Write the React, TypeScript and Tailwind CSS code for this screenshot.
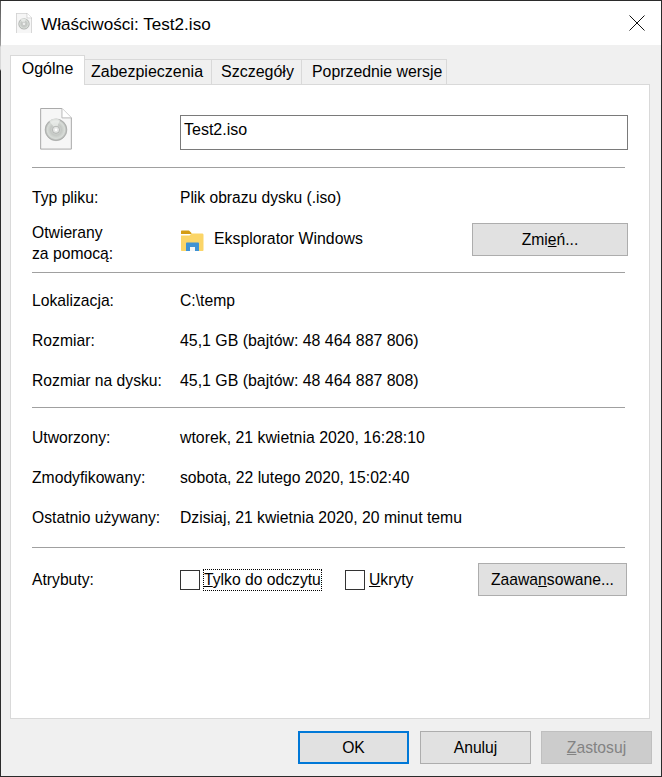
const font = { fontFamily: '"Liberation Sans", Arial, sans-serif' }

function IsoIcon({ size }: { size: number }) {
  return (
    <svg width={size} height={size * 1.3} viewBox="0 0 32 42" className="shrink-0">
      <defs>
        <radialGradient id={`disc${size}`} cx="50%" cy="50%" r="50%">
          <stop offset="0" stopColor="#e8e8e8" />
          <stop offset="0.5" stopColor="#c4c8c4" />
          <stop offset="0.8" stopColor="#d8dcd8" />
          <stop offset="1" stopColor="#a8aaa8" />
        </radialGradient>
      </defs>
      <path d="M0.5 0.5H22L31.5 10V41.5H0.5Z" fill="#f6f6f6" stroke="#a8a8a8" />
      <path d="M22 0.5V10H31.5" fill="#ffffff" stroke="#b8b8b8" />
      <circle cx="16" cy="22" r="11" fill={`url(#disc${size})`} stroke="#a4a6a4" strokeWidth="0.6" />
      <path d="M16 22L9 13A11 11 0 0 1 20 12Z" fill="#f0f2f0" opacity="0.7" />
      <circle cx="16" cy="22" r="3.6" fill="#e4e6e4" stroke="#a8aaa8" strokeWidth="0.8" />
      <circle cx="16" cy="22" r="1.3" fill="#ffffff" />
    </svg>
  )
}

function FolderIcon() {
  return (
    <svg width="24" height="24" viewBox="0 0 24 24" className="shrink-0">
      <path d="M1 2.5C1 1.9 1.4 1.5 2 1.5H9L11.5 4V5H1Z" fill="#d49c14" />
      <path d="M1 6.5L9.5 6.5L11.5 4.5H22C22.6 4.5 23.5 5 23.5 5.6V21C23.5 21.6 23 22 22.4 22H2C1.4 22 1 21.6 1 21Z" fill="#fbd568" />
      <path d="M6 22V14.5C6 14 6.4 13.5 7 13.5H18C18.6 13.5 19 14 19 14.5V22H15V18H10V22Z" fill="#3f92d4" />
      <rect x="10" y="18" width="5" height="4" fill="#f4f6f8" />
    </svg>
  )
}

function Separator() {
  return <div className="ml-[21px] mr-[24px] h-px bg-[#a0a0a0]" />
}

function Row({
  label,
  value,
  className,
  valueClass,
}: {
  label: string
  value: string
  className?: string
  valueClass?: string
}) {
  return (
    <div className={`flex h-[18px] items-center pl-[21px] ${className ?? ''}`}>
      <span className="w-[148px] shrink-0">{label}</span>
      <span className={valueClass}>{value}</span>
    </div>
  )
}

function Button({
  children,
  className,
}: {
  children: React.ReactNode
  className?: string
}) {
  return (
    <button className={`flex h-[33px] items-center justify-center ${className ?? ''}`}>
      {children}
    </button>
  )
}

const normalButton = 'border border-[#adadad] bg-[#e1e1e1]'

export default function App() {
  return (
    <div
      style={font}
      className="relative flex h-[777px] w-[662px] flex-col overflow-hidden border-t border-r border-b border-[#2b2b2b] bg-[#f0f0f0] text-[15.7px] text-black"
    >
      {/* window edge over the left side */}
      <div className="absolute bottom-0 left-0 top-0 w-px bg-[linear-gradient(to_bottom,#555555_0,#999999_44px,#d8d8d8_46px,#d8d8d8_68px,#2b2b2b_70px)]" />

      {/* TITLE BAR */}
      <div className="flex h-[44px] shrink-0 items-center bg-white pl-4 pr-4">
        <IsoIcon size={16} />
        <span className="ml-[9px] mt-[3px] text-[17.1px]">Właściwości: Test2.iso</span>
        <svg width="16" height="16" viewBox="0 0 16 16" className="ml-auto">
          <path d="M0.5 0.5L15.5 15.5M15.5 0.5L0.5 15.5" stroke="#111111" strokeWidth="1" />
        </svg>
      </div>

      {/* TABS */}
      <div className="relative z-10 -mb-px ml-[10px] mt-[10px] flex h-[30px] shrink-0 items-end text-[16px]">
        <div className="flex h-[30px] w-[75px] items-center justify-center border-x border-t border-[#d9d9d9] bg-white pb-[3px]">
          Ogólne
        </div>
        <div className="flex h-[26px] w-[127px] items-center border-r border-t border-b border-[#d9d9d9] pl-[6px]">
          Zabezpieczenia
        </div>
        <div className="flex h-[26px] w-[90px] items-center border-r border-t border-b border-[#d9d9d9] pl-[9px]">
          Szczegóły
        </div>
        <div className="flex h-[26px] w-[145px] items-center border-r border-t border-b border-[#d9d9d9] pl-[10px] text-[15.85px]">
          Poprzednie wersje
        </div>
      </div>

      {/* PANEL */}
      <div className="ml-[10px] h-[635px] w-[640px] shrink-0 border border-[#d9d9d9] bg-white">
        <div className="flex h-[82px] items-start pl-[29px]">
          <div className="mt-[23px]">
            <IsoIcon size={32} />
          </div>
          <div className="ml-[108px] mt-[30px] flex h-[35px] w-[448px] items-start border border-[#7a7a7a] pl-[3px] pt-[2px] text-[16px]">
            Test2.iso
          </div>
        </div>
        <Separator />

        <Row label="Typ pliku:" value="Plik obrazu dysku (.iso)" className="mt-[21px]" valueClass="text-[15.6px]" />

        <div className="mt-[16px] flex h-[33px] pl-[21px]">
          <div className="-mt-[1px] w-[148px] shrink-0 leading-[21px]">
            Otwierany
            <br />
            za pomocą:
          </div>
          <div className="flex h-[33px] flex-1 items-start">
            <div className="mt-[6px]">
              <FolderIcon />
            </div>
            <span className="ml-[10px] mt-[4px] text-[15.85px]">Eksplorator Windows</span>
            <Button className={`ml-auto mr-[21px] w-[156px] ${normalButton}`}>
              <span>
                Zmi<span className="underline">e</span>ń...
              </span>
            </Button>
          </div>
        </div>

        <div className="h-[16px]" />
        <Separator />

        <Row label="Lokalizacja:" value="C:\temp" className="mt-[19px]" />
        <Row label="Rozmiar:" value="45,1 GB (bajtów: 48 464 887 806)" className="mt-[22px]" valueClass="text-[15.9px]" />
        <Row label="Rozmiar na dysku:" value="45,1 GB (bajtów: 48 464 887 808)" className="mt-[22px]" valueClass="text-[15.9px]" />
        <div className="h-[17px]" />
        <Separator />

        <Row label="Utworzony:" value="wtorek, 21 kwietnia 2020, 16:28:10" className="mt-[21px]" valueClass="text-[15.85px]" />
        <Row label="Zmodyfikowany:" value="sobota, 22 lutego 2020, 15:02:40" className="mt-[22px]" />
        <Row label="Ostatnio używany:" value="Dzisiaj, 21 kwietnia 2020, 20 minut temu" className="mt-[22px]" valueClass="text-[15.75px]" />
        <div className="h-[20px]" />
        <Separator />

        <div className="mt-[15px] flex h-[33px] items-center pl-[21px] pr-[22px]">
          <span className="w-[148px] shrink-0">Atrybuty:</span>
          <span className="h-5 w-5 shrink-0 border border-[#333333]" />
          <span className="ml-[3px] flex h-[22px] w-[119px] items-center whitespace-nowrap border border-dotted border-black">
            <span>
              <span className="underline">T</span>ylko do odczytu
            </span>
          </span>
          <span className="ml-[23px] h-5 w-5 shrink-0 border border-[#333333]" />
          <span className="ml-1">
            <span className="underline">U</span>kryty
          </span>
          <Button className={`ml-auto w-[149px] ${normalButton}`}>
            <span>
              Zaawa<span className="underline">n</span>sowane...
            </span>
          </Button>
        </div>
      </div>

      {/* BOTTOM BUTTONS */}
      <div className="mt-[12px] flex justify-end gap-[10px] pr-[9px]">
        <Button className="mr-px w-[111px] border-2 border-[#0078d7] bg-[#e1e1e1]">OK</Button>
        <Button className={`w-[111px] ${normalButton}`}>Anuluj</Button>
        <Button className="w-[111px] border border-[#bfbfbf] bg-[#cccccc] text-[#838383]">
          <span>
            <span className="underline">Z</span>astosuj
          </span>
        </Button>
      </div>
    </div>
  )
}
